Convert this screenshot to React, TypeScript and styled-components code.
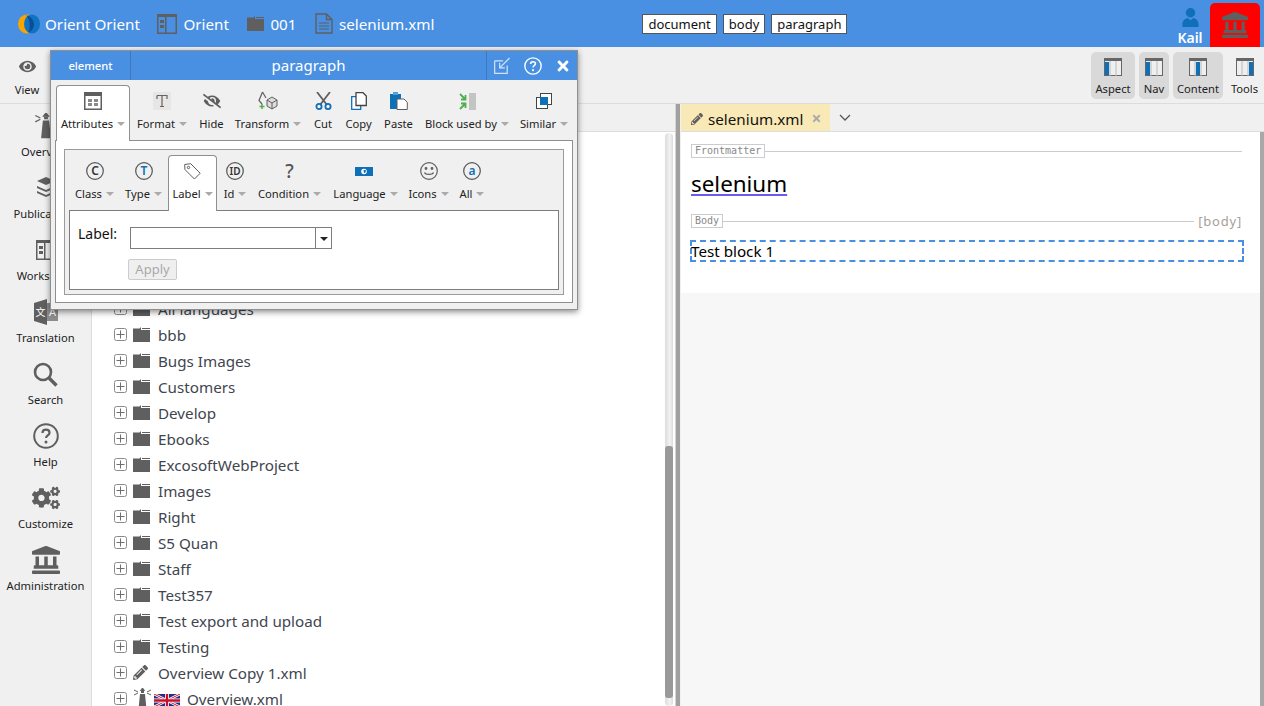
import React from "react"
import styled, { createGlobalStyle } from "styled-components"
import { FaCogs, FaEye, FaEyeSlash, FaLandmark, FaPencilAlt, FaTimes } from "react-icons/fa"

const BLUE = "#4a90e2"
const ICON = "#5f5f5f"
const ACCENT = "#0f70b7"

const GlobalStyle = createGlobalStyle`
  html, body {
    margin: 0;
    height: 706px;
    overflow: hidden;
    background: #f0f0f0;
    font-family: "Noto Sans", "Open Sans", sans-serif;
  }
`

const Page = styled.div`
  position: relative;
  width: 1264px;
  height: 706px;
  overflow: hidden;
  display: flex;
  flex-direction: column;
`

/* ---------- header ---------- */
const Header = styled.header`
  height: 47px;
  flex: none;
  background: ${BLUE};
  display: flex;
  align-items: center;
  padding-left: 18px;
  color: #fff;
  font-size: 15.2px;
`
const Crumb = styled.div<{ $gap?: number; $tight?: boolean }>`
  display: flex;
  align-items: center;
  gap: ${p => (p.$tight ? 5 : 6.5)}px;
  margin-left: ${p => p.$gap || 0}px;
  white-space: nowrap;
`
const PathButtons = styled.div`
  display: flex;
  gap: 6px;
  margin: 1px 0 0 208px;
`
const PathButton = styled.div`
  height: 18px;
  line-height: 18px;
  padding: 0 5px;
  background: #fff;
  border: 1px solid #555;
  color: #111;
  font-size: 13px;
`
const UserBox = styled.div`
  margin-left: auto;
  width: 36px;
  height: 47px;
  display: flex;
  flex-direction: column;
  align-items: center;
  font-size: 14px;
  font-weight: 600;
  line-height: 18px;
  padding-top: 8px;
  box-sizing: border-box;
  svg {
    margin-bottom: 2px;
  }
`
const RedBox = styled.div`
  width: 50px;
  height: 44px;
  margin: 3px 4px 0 2px;
  background: #ff0000;
  border-radius: 5px 5px 0 0;
  display: flex;
  align-items: center;
  justify-content: center;
  color: ${ICON};
  font-size: 26px;
`

/* ---------- toolbar ---------- */
const Toolbar = styled.div`
  height: 57px;
  flex: none;
  box-sizing: border-box;
  border-bottom: 1px solid #dcdcdc;
  display: flex;
  align-items: center;
  padding: 0 2px 0 8px;
`
const ViewButton = styled.div`
  width: 38px;
  display: flex;
  flex-direction: column;
  align-items: center;
  font-size: 11.2px;
  color: #222;
  gap: 7px;
  padding-top: 5px;
  svg {
    color: ${ICON};
    font-size: 17px;
  }
`
const PaneButtons = styled.div`
  margin-left: auto;
  display: flex;
  gap: 4px;
`
const PaneButton = styled.div<{ $on?: boolean; $w: number }>`
  width: ${p => p.$w}px;
  height: 47px;
  box-sizing: border-box;
  padding-top: 6px;
  border-radius: 5px;
  background: ${p => (p.$on ? "#d9d9d9" : "transparent")};
  display: flex;
  flex-direction: column;
  align-items: center;
  gap: 5px;
  font-size: 11.2px;
  line-height: 16px;
  color: #222;
`

/* ---------- main ---------- */
const Main = styled.div`
  flex: 1;
  display: flex;
  min-height: 0;
`
const Sidebar = styled.nav`
  width: 91px;
  flex: none;
  border-right: 1px solid #ddd;
  background: #f0f0f0;
`
const SideItem = styled.div`
  height: 62px;
  box-sizing: border-box;
  padding-top: 4px;
  display: flex;
  flex-direction: column;
  align-items: center;
  font-size: 11.2px;
  line-height: 16px;
  color: #222;
  white-space: nowrap;
`
const SideIcon = styled.div`
  height: 36px;
  display: flex;
  align-items: center;
  justify-content: center;
  color: ${ICON};
  font-size: 28px;
`
const TreePane = styled.div`
  position: relative;
  width: 583px;
  flex: none;
  background: #fff;
  display: flex;
  flex-direction: column;
`
const TreeTabs = styled.div`
  height: 28px;
  flex: none;
  background: #f0f0f0;
  border-bottom: 1px solid #ddd;
  box-sizing: border-box;
`
const TreeList = styled.div`
  padding: 164px 0 0 22px;
  font-size: 15.2px;
  color: #3f4650;
`
const TreeRow = styled.div`
  height: 26px;
  display: flex;
  align-items: center;
  white-space: nowrap;
`
const RowIcons = styled.div`
  display: flex;
  align-items: center;
  gap: 6px;
  margin: -2px 8px 0 0;
`
const FlagSlot = styled.span`
  display: flex;
  margin: 4px -1px 0 -4px;
`
const ScrollTrack = styled.div`
  position: absolute;
  right: 2px;
  top: 29px;
  bottom: 0;
  width: 8px;
  border-radius: 4px;
  background: linear-gradient(90deg, #dcdcdc, #f2f2f2 60%, #dcdcdc);
`
const ScrollThumb = styled.div`
  position: absolute;
  left: 0;
  right: 0;
  top: 313px;
  height: 252px;
  border-radius: 3px;
  background: #999;
`
const Splitter = styled.div`
  width: 6px;
  flex: none;
  background: #f0f0f0;
  border-left: 1px solid #d4d4d4;
  box-sizing: border-box;
  position: relative;
  &::after {
    content: "";
    position: absolute;
    left: 0;
    top: 0;
    bottom: 0;
    width: 4px;
    background: #a0a0a0;
  }
`
const DocPane = styled.div`
  flex: 1;
  display: flex;
  flex-direction: column;
  background: #f7f7f7;
  position: relative;
`
const DocTabs = styled.div`
  height: 28px;
  flex: none;
  display: flex;
  align-items: center;
  background: #f0f0f0;
  border-bottom: 1px solid #ddd;
  box-sizing: border-box;
`
const DocTab = styled.div`
  height: 27px;
  width: 149px;
  padding: 2px 0 0 10px;
  box-sizing: border-box;
  display: flex;
  align-items: center;
  gap: 5px;
  background: #f9e9b6;
  font-size: 15.2px;
  color: #111;
  svg {
    color: ${ICON};
    font-size: 12px;
  }
  svg:last-child {
    color: #aaa;
    font-size: 11px;
    margin-left: 3px;
  }
`
const Chevron = styled.svg`
  margin-left: 9px;
`
const DocBody = styled.div`
  width: 579px;
  height: 161px;
  background: #fff;
  box-sizing: border-box;
  padding: 12px 18px 0 10px;
`
const SectionRow = styled.div`
  display: flex;
  align-items: center;
  height: 14px;
`
const SectionTag = styled.span`
  border: 1px solid #ccc;
  font-family: "DejaVu Sans Mono", monospace;
  font-size: 10px;
  line-height: 12px;
  padding: 0 3px;
  color: #888;
`
const SectionLine = styled.span`
  flex: 1;
  height: 1px;
  background: #ccc;
`
const BodyMark = styled.span`
  margin-left: 4px;
  font-size: 13px;
  letter-spacing: 0.8px;
  color: #a5a09a;
`
const DocTitle = styled.div`
  margin: 12px 0 16px;
  font-size: 22.4px;
  line-height: 28px;
  color: #000;
  text-decoration: underline;
  text-decoration-color: #6a5cf0;
`
const Block = styled.div`
  margin: 12px -2px 0 -1px;
  height: 22px;
  box-sizing: border-box;
  border: 2px dashed ${BLUE};
  font-size: 15.2px;
  line-height: 19px;
  color: #000;
  white-space: nowrap;
  span {
    margin-left: -1px;
  }
`
const RightBar = styled.div`
  position: absolute;
  right: 0;
  top: 28px;
  bottom: 0;
  width: 4px;
  background: #a8a8a8;
`

/* ---------- floating dialog ---------- */
const Dialog = styled.div`
  position: absolute;
  left: 50px;
  top: 50px;
  width: 528px;
  height: 260px;
  box-sizing: border-box;
  border: 1px solid #8f8f8f;
  background: #f0f0f0;
  box-shadow: 0 2px 6px rgba(0, 0, 0, 0.45);
  z-index: 5;
`
const TitleBar = styled.div`
  height: 29px;
  background: ${BLUE};
  display: flex;
  color: #fff;
`
const TitleKind = styled.div`
  width: 79px;
  border-right: 1px solid #3f78bd;
  display: flex;
  align-items: center;
  justify-content: center;
  font-size: 11.2px;
  font-weight: 500;
`
const TitleName = styled.div`
  flex: 1;
  display: flex;
  align-items: center;
  justify-content: center;
  font-size: 15px;
  padding-bottom: 2px;
`
const TitleTools = styled.div`
  width: 91px;
  box-sizing: border-box;
  border-left: 1px solid #3f78bd;
  padding-left: 7px;
  display: flex;
  align-items: center;
  gap: 13px;
`
const Ribbon = styled.div`
  display: flex;
  height: 61px;
  padding: 5px 0 0 5px;
  box-sizing: border-box;
  position: relative;
  z-index: 1;
`
const RibbonItem = styled.div<{ $active?: boolean; $w: number }>`
  width: ${p => p.$w}px;
  flex: none;
  box-sizing: border-box;
  display: flex;
  flex-direction: column;
  align-items: center;
  font-size: 11.2px;
  line-height: 15px;
  color: #222;
  white-space: nowrap;
  background: ${p => (p.$active ? "#fff" : "transparent")};
  border: 1px solid ${p => (p.$active ? "#8f8f8f" : "transparent")};
  border-bottom: none;
  border-radius: ${p => (p.$active ? "4px 4px 0 0" : "0")};
  height: 100%;
`
const RibbonIcon = styled.div`
  height: 30px;
  width: 100%;
  display: flex;
  align-items: center;
  justify-content: center;
  color: ${ICON};
  font-size: 18px;
  flex: none;
`
const RibbonLabel = styled.div`
  display: flex;
  align-items: center;
`
const QuestionMark = styled.span`
  font-size: 19px;
  font-weight: 500;
  color: #555;
`
const Caret = styled.span`
  width: 0;
  height: 0;
  margin-left: 4px;
  margin-top: 1px;
  border-left: 4px solid transparent;
  border-right: 4px solid transparent;
  border-top: 4px solid #aaa;
`
const OuterPanel = styled.div`
  margin: -1px 4px 0 4px;
  height: 163px;
  box-sizing: border-box;
  border: 1px solid #8f8f8f;
  background: #fff;
  padding: 8px 8px 0;
`
const InnerFrame = styled.div`
  height: 146px;
  box-sizing: border-box;
  border: 1px solid #9b9b9b;
  background: #f0f0f0;
`
const InnerPanel = styled.div`
  margin: -1px 4px 0 4px;
  height: 80px;
  box-sizing: border-box;
  border: 1px solid #7d7d7d;
  background: #fff;
  padding: 16px 0 0 8px;
`
const FieldRow = styled.div`
  display: flex;
  gap: 13px;
  font-size: 14px;
  line-height: 14px;
  color: #111;
`
const Combo = styled.div`
  width: 202px;
  height: 22px;
  box-sizing: border-box;
  border: 1px solid #7d7d7d;
  display: flex;
  justify-content: flex-end;
`
const ComboArrow = styled.div`
  width: 16px;
  border-left: 1px solid #7d7d7d;
  display: flex;
  align-items: center;
  justify-content: center;
  padding-top: 2px;
  box-sizing: border-box;
  &::after {
    content: "";
    border-left: 4px solid transparent;
    border-right: 4px solid transparent;
    border-top: 4px solid #222;
  }
`
const ApplyButton = styled.div`
  width: 49px;
  height: 21px;
  margin: 10px 0 0 50px;
  box-sizing: border-box;
  border: 1px solid #ccc;
  border-radius: 2px;
  background: #efefef;
  color: #aaa;
  font-size: 13px;
  line-height: 19px;
  text-align: center;
`

/* ---------- drawings ---------- */
const FolderIcon = ({ size = 17, color = ICON }: { size?: number; color?: string }) => (
  <svg width={size} height={(size * 15) / 17} viewBox="0 0 17 15">
    <path d="M0 1.5h6.5L8 0h0v3H17v12H0z" fill={color} />
    <path d="M9 1h8v1H9z" fill={color} />
  </svg>
)

const PlusBox = () => (
  <svg width="13" height="13" viewBox="0 0 13 13">
    <rect x=".5" y=".5" width="12" height="12" rx="2" fill="#fff" stroke="#8a8a8a" />
    <path d="M6.5 2.5v8M2.5 6.5h8" stroke="#6e6e6e" />
  </svg>
)

const Lighthouse = ({ size = 19 }: { size?: number }) => (
  <svg width={size} height={size * 1.05} viewBox="0 0 19 20" fill={ICON}>
    <path d="M8 3h3v2H8zM7 6h5l1.4 14H5.6z" />
    <path d="M9.5 0l2 2.5h-4zM1 2l4 2M1 7l4-2M18 2l-4 2M18 7l-4-2" stroke={ICON} strokeWidth="1" />
  </svg>
)

const LayoutIcon = () => (
  <svg width="20" height="20" viewBox="0 0 20 20">
    <rect x=".75" y=".75" width="18.5" height="18.5" fill="none" stroke={ICON} strokeWidth="1.5" />
    <path d="M0 0h20v3H0zM8 0h1.5v20H8z" fill={ICON} />
    <path d="M3 6h4v3H3zM3 11h4v3H3z" fill={ICON} />
  </svg>
)

const FileIcon = () => (
  <svg width="18" height="21" viewBox="0 0 18 21" fill="none" stroke={ICON} strokeWidth="1.4">
    <path d="M1 1h10.5L17 6.5V20H1zM11.5 1v5.5H17" />
    <path d="M4 10h10M4 13h10M4 16h10" strokeWidth="1" />
  </svg>
)

const Logo = () => (
  <svg width="22" height="20" viewBox="0 0 22 20">
    <ellipse cx="9" cy="10" rx="9" ry="9.5" fill="#f7a600" />
    <ellipse cx="14" cy="10" rx="8" ry="9.5" fill="#1273c4" />
    <path d="M8 1.500c4 2 5 13 2 17 4-1 6-5 6-8.500s-3-8-8-8.500z" fill="#0a4f96" />
  </svg>
)

const UserIcon = () => (
  <svg width="17" height="20" viewBox="0 0 17 20" fill={ACCENT}>
    <circle cx="8.5" cy="5" r="5" />
    <path d="M0 20v-3c0-4 3-6 5.5-6.5L8.5 13l3-2.500C14 11 17 13 17 17v3z" />
  </svg>
)

const PaneIcon = ({ col }: { col: number }) => (
  <svg width="18" height="18" viewBox="0 0 18 18">
    <rect x=".5" y=".5" width="17" height="17" fill="#efefef" stroke="#666" />
    <path d="M0 0h18v3H0z" fill="#666" />
    <path d="M6 3v15M12 3v15" stroke="#bbb" strokeWidth="1" />
    <rect x={[1, 7, 13][col]} y="4" width="4" height="13" fill={ACCENT} />
  </svg>
)

const BooksIcon = () => (
  <svg width="24" height="24" viewBox="0 0 24 24" fill={ICON}>
    <path d="M3 5l9-4 9 4-9 4zM3 10l9 4 9-4v2l-9 4-9-4zM3 15l9 4 9-4v2l-9 4-9-4z" />
  </svg>
)

const TranslateIcon = () => (
  <svg width="26" height="26" viewBox="0 0 26 26" fontFamily="Noto Sans, Noto Sans CJK SC, sans-serif" fill="#fff">
    <path d="M13 4h12v18H13z" fill="#8c8c8c" />
    <path d="M1 4l13-4v26L1 22z" fill={ICON} />
    <text x="7.500" y="17" textAnchor="middle" fontSize="10">文</text>
    <text x="19.500" y="17" textAnchor="middle" fontSize="11">A</text>
  </svg>
)

const SearchIcon = () => (
  <svg width="25" height="25" viewBox="0 0 25 25" fill="none" stroke={ICON}>
    <circle cx="10" cy="10" r="8" strokeWidth="2.6" />
    <path d="M16 16l7.500 7.500" strokeWidth="3.4" />
  </svg>
)

const HelpIcon = ({ size = 26, color = ICON }: { size?: number; color?: string }) => (
  <svg width={size} height={size} viewBox="0 0 26 26" fill="none">
    <circle cx="13" cy="13" r="11.800" stroke={color} strokeWidth="2" />
    <path d="M9.500 10c0-2 1.500-3.300 3.500-3.300s3.500 1.200 3.500 3c0 2.800-3.500 2.600-3.500 5.300" stroke={color} strokeWidth="2.200" />
    <circle cx="13" cy="19" r="1.500" fill={color} />
  </svg>
)

const TableIcon = () => (
  <svg width="18" height="18" viewBox="0 0 18 18" fill={ICON}>
    <path d="M0 0h18v18H0zM1.500 4v12.500h15V4z" fillRule="evenodd" />
    <path d="M4 7h4v3H4zM10 7h4v3h-4zM4 11h4v3H4zM10 11h4v3h-4z" fill="#8a8a8a" />
  </svg>
)

const FormatIcon = () => (
  <svg width="18" height="18" viewBox="0 0 18 18">
    <rect width="18" height="18" fill="#e6e6e6" />
    <path d="M4 3.500h10V7M4 3.500V7M9 3.500v11M7 14.500h4" fill="none" stroke="#6b625c" strokeWidth="1.200" />
  </svg>
)

const TransformIcon = () => (
  <svg width="20" height="20" viewBox="0 0 20 20">
    <path d="M4.500 1L1 9.500l3 3.500M4.500 1L8 7" fill="none" stroke={ICON} strokeWidth="1.200" />
    <path d="M9 9l5-3 5 3v6l-5 3-5-3z" fill="#ddd" stroke={ICON} />
    <path d="M14 12v6M9 9l5 3 5-3" fill="none" stroke={ICON} />
    <path d="M4 13v5M1.500 15.500h5" stroke="#4db04a" strokeWidth="1.500" />
  </svg>
)

const ScissorsIcon = () => (
  <svg width="17" height="18" viewBox="0 0 17 18" fill="none">
    <path d="M2 0l10 13M15 0L5 13" stroke={ICON} strokeWidth="1.800" />
    <circle cx="4" cy="14.500" r="2.600" stroke={ACCENT} strokeWidth="1.800" />
    <circle cx="13" cy="14.500" r="2.600" stroke={ACCENT} strokeWidth="1.800" />
  </svg>
)

const CopyIcon = () => (
  <svg width="16" height="18" viewBox="0 0 16 18">
    <path d="M.7 4.700h9v12.600h-9z" fill="#fff" stroke={ACCENT} strokeWidth="1.300" />
    <path d="M5 .7h7l3.300 3.300v9.500H5z" fill="#fff" stroke="#444" strokeWidth="1.300" />
  </svg>
)

const PasteIcon = () => (
  <svg width="18" height="18" viewBox="0 0 18 18">
    <path d="M0 2h11v15H0z" fill={ACCENT} />
    <path d="M3 0h5v3H3z" fill="#5a9fd4" />
    <path d="M7 7h7l3.300 3.300V17.500H7z" fill="#fff" stroke={ICON} />
  </svg>
)

const BlockUsedIcon = () => (
  <svg width="17" height="17" viewBox="0 0 17 17">
    <path d="M10 0h7v17h-7z" fill="#c4c4c4" />
    <path d="M1 1l5 5M2 6.500h4.500V2M1 16l5-5M2 10.500h4.500V15" fill="none" stroke="#4db04a" strokeWidth="1.800" />
  </svg>
)

const SimilarIcon = () => (
  <svg width="16" height="16" viewBox="0 0 16 16">
    <rect x="4.500" y=".5" width="11" height="11" fill="#fff" stroke="#444" />
    <rect x=".5" y="4.500" width="11" height="11" fill="#fff" stroke="#444" />
    <rect x="4" y="4" width="8" height="8" fill={ACCENT} />
  </svg>
)

const CircleLetter = ({ letter, color = "#333", ring = "#555", small }: { letter: string; color?: string; ring?: string; small?: boolean }) => (
  <svg width="18" height="18" viewBox="0 0 18 18">
    <circle cx="9" cy="9" r="8.300" fill="none" stroke={ring} strokeWidth="1.200" />
    <text x="9" y="13" textAnchor="middle" fontSize={small ? 10 : 12} fontFamily="Noto Sans" fontWeight="600" fill={color}>
      {letter}
    </text>
  </svg>
)

const TagIcon = () => (
  <svg width="17" height="17" viewBox="0 0 17 17" fill="none" stroke={ICON}>
    <path d="M.7 1.500l6-.8 9.500 9.500-5.800 5.800L.9 6.500z" />
    <circle cx="4.500" cy="4.500" r="1.200" />
  </svg>
)

const FlagGraphic = styled.svg`
  margin-right: 4px;
`

const FlagIcon = () => (
  <FlagGraphic width="18" height="9" viewBox="0 0 18 9">
    <rect width="18" height="9" fill="#0f70b7" />
    <circle cx="9" cy="4.500" r="2.800" fill="#fff" />
    <path d="M8.500 3h2.300v2.200L9 6z" fill="#0f70b7" />
  </FlagGraphic>
)

const SmileIcon = () => (
  <svg width="18" height="18" viewBox="0 0 18 18" fill="none" stroke={ICON} strokeWidth="1.200">
    <circle cx="9" cy="9" r="8.300" />
    <path d="M4.500 10.500c1 2.500 8 2.500 9 0" />
    <circle cx="6" cy="6.500" r=".8" fill={ICON} />
    <circle cx="12" cy="6.500" r=".8" fill={ICON} />
  </svg>
)

const UkFlag = () => (
  <svg width="26" height="13" viewBox="0 0 26 13">
    <rect width="26" height="13" fill="#24307f" />
    <path d="M0 0l26 13M26 0L0 13" stroke="#fff" strokeWidth="2.600" />
    <path d="M0 0l26 13M26 0L0 13" stroke="#c8102e" strokeWidth="1" />
    <path d="M13 0v13M0 6.500h26" stroke="#fff" strokeWidth="4" />
    <path d="M13 0v13M0 6.500h26" stroke="#c8102e" strokeWidth="2.400" />
  </svg>
)

const PopOutIcon = () => (
  <svg width="17" height="17" viewBox="0 0 18 18" fill="none" stroke="#cfe2f7" strokeWidth="1.300">
    <path d="M.7 4h9M.7 4v13.300h13.300V9" />
    <path d="M16.500 1L6 11.500M6 6v5.500h5.500" />
  </svg>
)

/* ---------- data ---------- */
const folders = [
  "All languages",
  "bbb",
  "Bugs Images",
  "Customers",
  "Develop",
  "Ebooks",
  "ExcosoftWebProject",
  "Images",
  "Right",
  "S5 Quan",
  "Staff",
  "Test357",
  "Test export and upload",
  "Testing",
]

const sideItems: [string, React.ReactNode][] = [
  ["Overview", <Lighthouse size={24} />],
  ["Publications", <BooksIcon />],
  ["Workspace", <LayoutIcon />],
  ["Translation", <TranslateIcon />],
  ["Search", <SearchIcon />],
  ["Help", <HelpIcon />],
  ["Customize", <FaCogs />],
  ["Administration", <FaLandmark />],
]

const paneButtons = [
  { label: "Aspect", w: 44, col: 0, on: true },
  { label: "Nav", w: 30, col: 0, on: true },
  { label: "Content", w: 50, col: 1, on: true },
  { label: "Tools", w: 35, col: 2, on: false },
]

const mainRibbon: { label: string; w: number; icon: React.ReactNode; caret?: boolean; active?: boolean }[] = [
  { label: "Attributes", w: 74, icon: <TableIcon />, caret: true, active: true },
  { label: "Format", w: 64, icon: <FormatIcon />, caret: true },
  { label: "Hide", w: 35, icon: <FaEyeSlash /> },
  { label: "Transform", w: 78, icon: <TransformIcon />, caret: true },
  { label: "Cut", w: 32, icon: <ScissorsIcon /> },
  { label: "Copy", w: 39, icon: <CopyIcon /> },
  { label: "Paste", w: 41, icon: <PasteIcon /> },
  { label: "Block used by", w: 96, icon: <BlockUsedIcon />, caret: true },
  { label: "Similar", w: 58, icon: <SimilarIcon />, caret: true },
]

const attrRibbon: { label: string; w: number; icon: React.ReactNode; active?: boolean }[] = [
  { label: "Class", w: 49, icon: <CircleLetter letter="C" /> },
  { label: "Type", w: 49, icon: <CircleLetter letter="T" color={ACCENT} /> },
  { label: "Label", w: 49, icon: <TagIcon />, active: true },
  { label: "Id", w: 36, icon: <CircleLetter letter="ID" small /> },
  { label: "Condition", w: 73, icon: <QuestionMark>?</QuestionMark> },
  { label: "Language", w: 79, icon: <FlagIcon /> },
  { label: "Icons", w: 47, icon: <SmileIcon /> },
  { label: "All", w: 40, icon: <CircleLetter letter="a" color={ACCENT} /> },
]

export default function App() {
  return (
    <Page>
      <GlobalStyle />
      <Header>
        <Crumb $tight>
          <Logo />
          Orient Orient
        </Crumb>
        <Crumb $gap={17}>
          <LayoutIcon />
          Orient
        </Crumb>
        <Crumb $gap={18}>
          <FolderIcon />
          001
        </Crumb>
        <Crumb $gap={18}>
          <FileIcon />
          selenium.xml
        </Crumb>
        <PathButtons>
          <PathButton>document</PathButton>
          <PathButton>body</PathButton>
          <PathButton>paragraph</PathButton>
        </PathButtons>
        <UserBox>
          <UserIcon />
          Kail
        </UserBox>
        <RedBox>
          <FaLandmark />
        </RedBox>
      </Header>

      <Toolbar>
        <ViewButton>
          <FaEye />
          View
        </ViewButton>
        <PaneButtons>
          {paneButtons.map(b => (
            <PaneButton key={b.label} $on={b.on} $w={b.w}>
              <PaneIcon col={b.col} />
              {b.label}
            </PaneButton>
          ))}
        </PaneButtons>
      </Toolbar>

      <Main>
        <Sidebar>
          {sideItems.map(([label, icon]) => (
            <SideItem key={label}>
              <SideIcon>{icon}</SideIcon>
              {label}
            </SideItem>
          ))}
        </Sidebar>

        <TreePane>
          <TreeTabs />
          <TreeList>
            {folders.map(name => (
              <TreeRow key={name}>
                <RowIcons>
                  <PlusBox />
                  <FolderIcon />
                </RowIcons>
                {name}
              </TreeRow>
            ))}
            <TreeRow>
              <RowIcons>
                <PlusBox />
                <FaPencilAlt size={15} color={ICON} style={{ marginRight: 2 }} />
              </RowIcons>
              Overview Copy 1.xml
            </TreeRow>
            <TreeRow>
              <RowIcons>
                <PlusBox />
                <Lighthouse />
                <FlagSlot>
                  <UkFlag />
                </FlagSlot>
              </RowIcons>
              Overview.xml
            </TreeRow>
          </TreeList>
          <ScrollTrack>
            <ScrollThumb />
          </ScrollTrack>
        </TreePane>

        <Splitter />

        <DocPane>
          <DocTabs>
            <DocTab>
              <FaPencilAlt />
              selenium.xml
              <FaTimes />
            </DocTab>
            <Chevron width="12" height="7" viewBox="0 0 12 7" fill="none" stroke="#555" strokeWidth="1.300">
              <path d="M1 1l5 5 5-5" />
            </Chevron>
          </DocTabs>
          <DocBody>
            <SectionRow>
              <SectionTag>Frontmatter</SectionTag>
              <SectionLine />
            </SectionRow>
            <DocTitle>selenium</DocTitle>
            <SectionRow>
              <SectionTag>Body</SectionTag>
              <SectionLine />
              <BodyMark>[body]</BodyMark>
            </SectionRow>
            <Block>
              <span>Test block 1</span>
            </Block>
          </DocBody>
          <RightBar />
        </DocPane>
      </Main>

      <Dialog>
        <TitleBar>
          <TitleKind>element</TitleKind>
          <TitleName>paragraph</TitleName>
          <TitleTools>
            <PopOutIcon />
            <HelpIcon size={18} color="#fff" />
            <FaTimes size={16} />
          </TitleTools>
        </TitleBar>
        <Ribbon>
          {mainRibbon.map(item => (
            <RibbonItem key={item.label} $active={item.active} $w={item.w}>
              <RibbonIcon>{item.icon}</RibbonIcon>
              <RibbonLabel>
                {item.label}
                {item.caret && <Caret />}
              </RibbonLabel>
            </RibbonItem>
          ))}
        </Ribbon>
        <OuterPanel>
          <InnerFrame>
            <Ribbon>
              {attrRibbon.map(item => (
                <RibbonItem key={item.label} $active={item.active} $w={item.w}>
                  <RibbonIcon>{item.icon}</RibbonIcon>
                  <RibbonLabel>
                    {item.label}
                    <Caret />
                  </RibbonLabel>
                </RibbonItem>
              ))}
            </Ribbon>
            <InnerPanel>
              <FieldRow>
                Label:
                <Combo>
                  <ComboArrow />
                </Combo>
              </FieldRow>
              <ApplyButton>Apply</ApplyButton>
            </InnerPanel>
          </InnerFrame>
        </OuterPanel>
      </Dialog>
    </Page>
  )
}
